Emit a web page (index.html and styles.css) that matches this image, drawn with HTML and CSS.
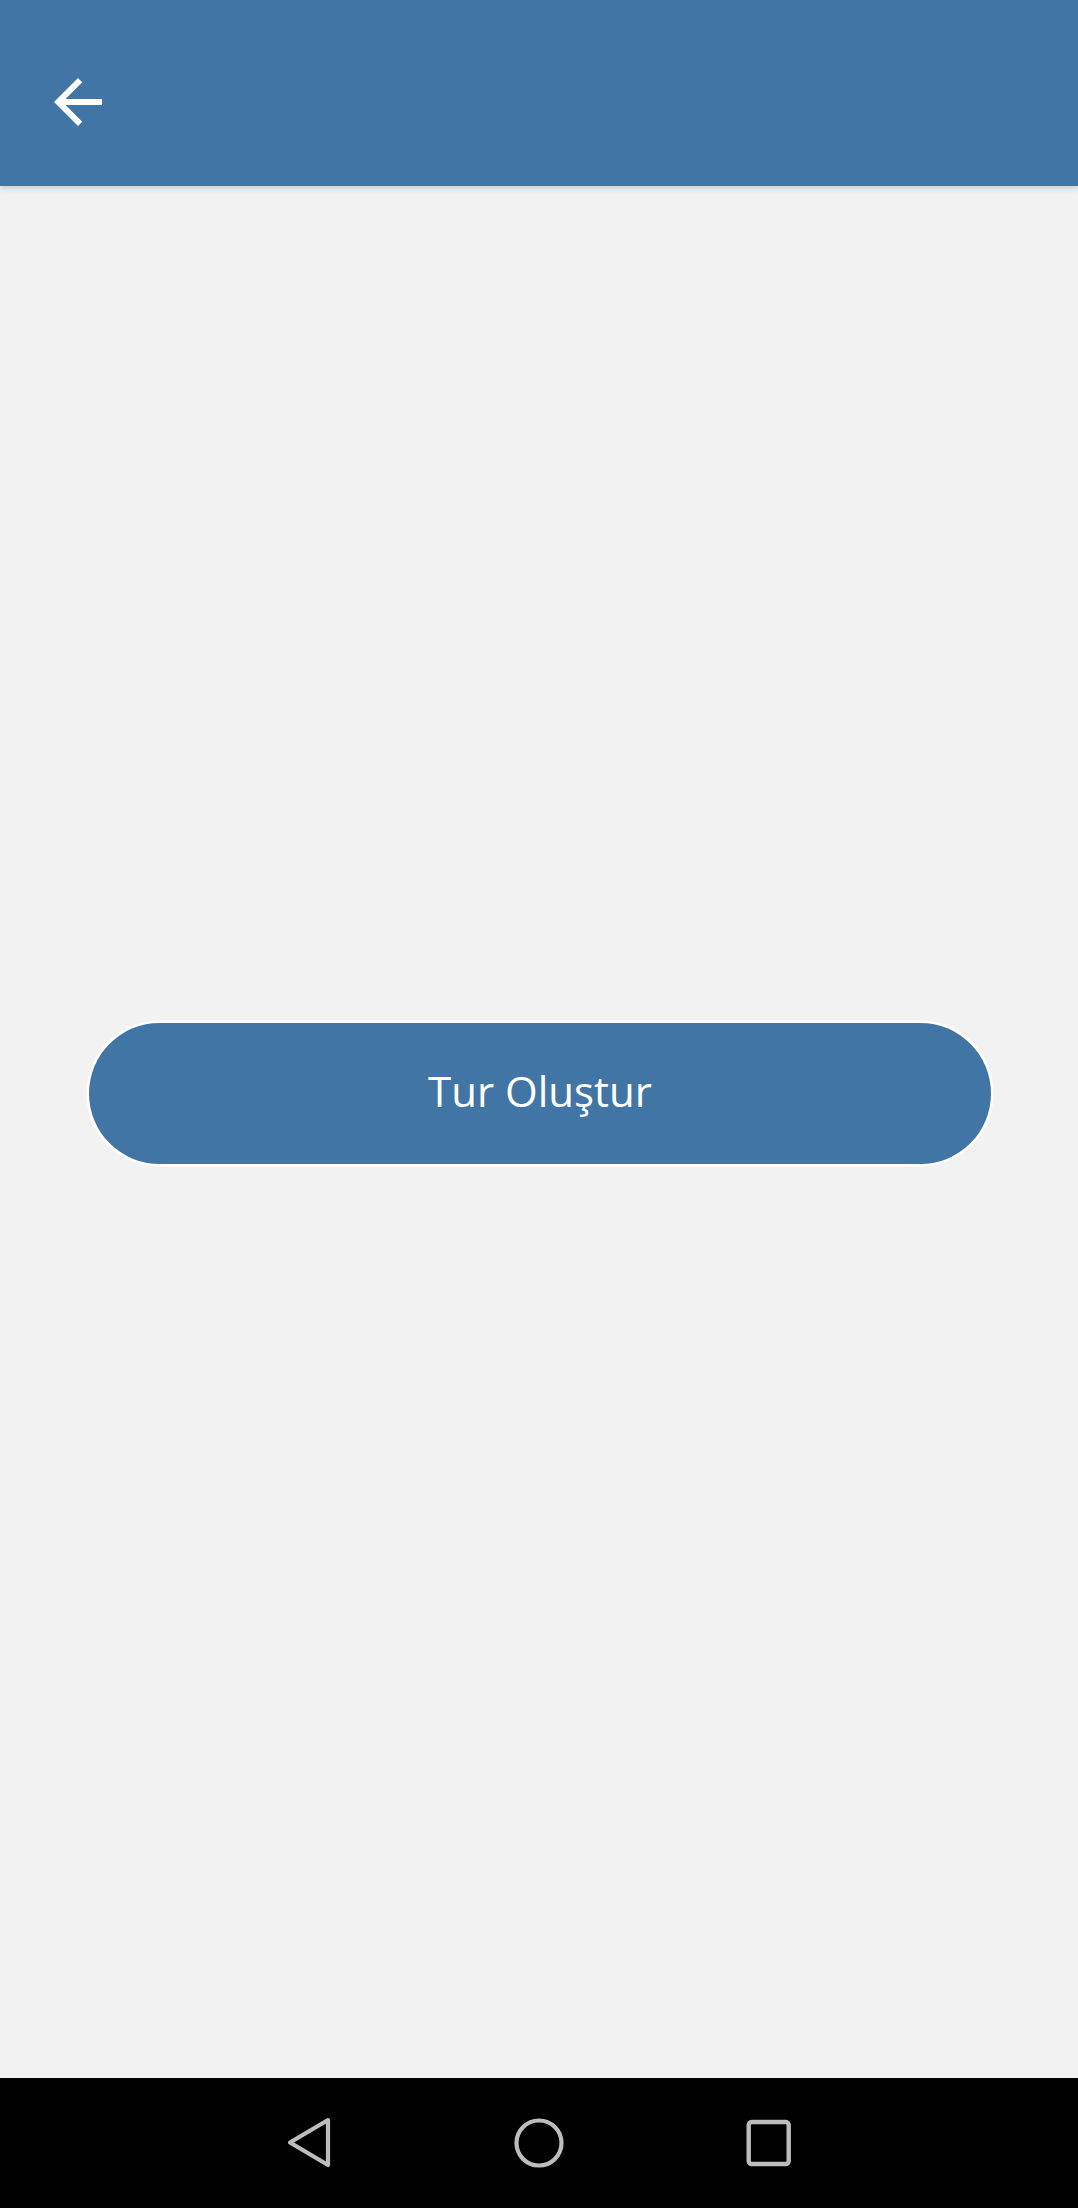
FILE: index.html
```html
<!DOCTYPE html>
<html lang="tr">
<head>
<meta charset="utf-8">
<title>Tur Oluştur</title>
<link rel="stylesheet" href="styles.css">
</head>
<body>
<div class="screen">
  <header class="appbar">
    <button class="back" aria-label="Geri">
      <svg width="72" height="72" viewBox="0 0 24 24"><path fill="#ffffff" d="M20 11H7.83l5.59-5.59L12 4l-8 8 8 8 1.41-1.41L7.83 13H20v-2z"/></svg>
    </button>
  </header>
  <main class="content">
    <button class="primary">Tur Oluştur</button>
  </main>
  <nav class="sysnav">
    <svg class="navicon" width="56" height="56" viewBox="0 0 56 56"><path d="M47 5 L9 27.5 L47 50 Z" fill="none" stroke="#bdbdbd" stroke-width="4.2" stroke-linejoin="round"/></svg>
    <svg class="navicon" width="56" height="56" viewBox="0 0 56 56"><circle cx="28" cy="28" r="22.5" fill="none" stroke="#bdbdbd" stroke-width="4.2"/></svg>
    <svg class="navicon" width="56" height="56" viewBox="0 0 56 56"><rect x="7.7" y="7" width="40" height="42" rx="3" fill="none" stroke="#bdbdbd" stroke-width="4.4"/></svg>
  </nav>
</div>
</body>
</html>
```
FILE: styles.css
```css
html, body {
  margin: 0;
  padding: 0;
  background: #f2f2f2;
}
.screen {
  width: 1078px;
  height: 2208px;
  display: flex;
  flex-direction: column;
  font-family: "Open Sans", "Noto Sans", sans-serif;
}
.appbar {
  height: 186px;
  box-sizing: border-box;
  flex: none;
  background: #4175a5;
  box-shadow: 0 2px 6px rgba(0, 0, 0, 0.18);
  display: flex;
  align-items: flex-start;
  padding: 66px 0 0 42px;
  position: relative;
  z-index: 1;
}
.back {
  width: 72px;
  height: 72px;
  padding: 0;
  border: 0;
  background: transparent;
  display: block;
}
.back svg {
  display: block;
}
.content {
  flex: 1;
  background: #f2f2f2;
  padding: 837px 87px 0 89px;
}
.primary {
  appearance: none;
  -webkit-appearance: none;
  display: block;
  box-sizing: border-box;
  width: 902px;
  height: 141px;
  border: 0;
  border-radius: 71px;
  box-shadow: 0 0 0 2.5px #ffffff;
  background: #4175a5;
  color: #ffffff;
  font-family: "Open Sans", "Noto Sans", sans-serif;
  font-size: 42px;
  font-weight: 400;
  padding: 0 0 6px 0;
  text-align: center;
}
.sysnav {
  height: 130px;
  flex: none;
  background: #000000;
  display: flex;
  align-items: center;
  padding-left: 281px;
  gap: 174px;
}
.navicon {
  display: block;
}
```
